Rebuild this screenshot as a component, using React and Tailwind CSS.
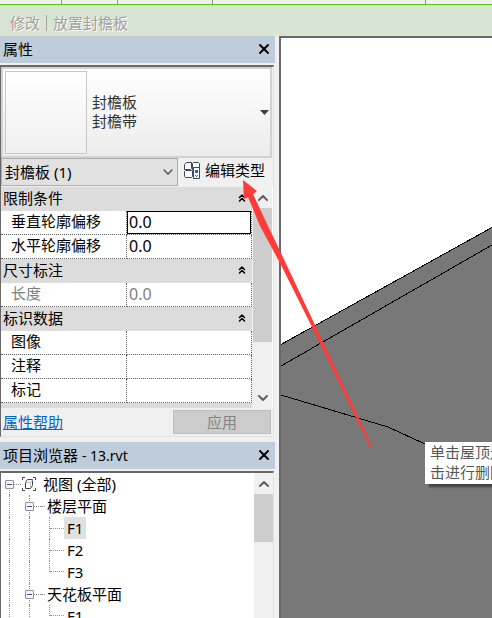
import { useState } from 'react';
import { ChevronDown, ChevronUp, ChevronsUp, X } from 'lucide-react';

const GROUPS = [
    {
        title: '限制条件',
        rows: [
            { id: 'vertical', label: '垂直轮廓偏移', active: true },
            { id: 'horizontal', label: '水平轮廓偏移' },
        ],
    },
    {
        title: '尺寸标注',
        rows: [{ id: 'length', label: '长度', disabled: true }],
    },
    {
        title: '标识数据',
        rows: [
            { id: 'image', label: '图像' },
            { id: 'comment', label: '注释' },
            { id: 'mark', label: '标记' },
        ],
    },
    { title: '', rows: [] },
];

const TitleBar = ({ children }) => (
    <div className="flex h-[27px] items-center justify-between bg-[#bfccda] pb-px pl-[3px] pr-[3px]">
        <h2>{children}</h2>
        <button type="button" aria-label="关闭">
            <X size={16} strokeWidth={3} />
        </button>
    </div>
);

const Frame = ({ className, children }) => (
    <div className={`mt-[2px] w-[274px] border-l border-r border-t-2 border-l-[#696969] border-r-[#e3e3e3] border-t-[#696969] ${className}`}>
        {children}
    </div>
);

const TypeIcon = () => (
    <svg width="17" height="17" viewBox="0 0 17 17" fill="#fafafa" stroke="#3b4656">
        <path d="M2.500 .5h5v6l-1 1h-6v-5z" />
        <path d="M9.500 .5h5l1 1v5l-1 1h-6v-6z" />
        <path d="M1.500 8.500h7v6l-1 1h-6l-1-1v-5z" />
        <path d="M9.500 5.500h6v11h-6z" fill="#fff" />
        <path d="M11 8h3v3h-3z" fill="#1d65b5" stroke="none" />
        <path d="M11 13.500h1M13 13.500h1M12 14.500h1" stroke="#1d65b5" />
    </svg>
);

const ViewsIcon = () => (
    <svg width="14" height="14" viewBox="0 0 14 14" fill="none" stroke="#444">
        <path d="M3 .5H.5V3M11 .5h2.500V3M.5 11v2.500H3M13.500 11v2.500H11" />
        <path d="M3.500 5.500l2-3h5v6l-2 3h-5z" fill="#fff" />
        <path d="M4 5.500h4.500V11M8.500 5.500l2-2.500" stroke="#b8c0ca" />
    </svg>
);

const Scrollbar = ({ thumb, end }) => (
    <div className="flex w-[19px] shrink-0 flex-col items-center bg-[#f0f0f0]">
        <button type="button" aria-label="向上滚动" className="flex h-[21px] w-full items-center justify-center">
            <ChevronUp size={16} strokeWidth={3} color="#606060" />
        </button>
        <div className={`w-full bg-[#cdcdcd] ${thumb}`} />
        {end && (
            <button type="button" aria-label="向下滚动" className="mt-auto flex h-[21px] w-full items-center justify-center">
                <ChevronDown size={16} strokeWidth={3} color="#606060" />
            </button>
        )}
    </div>
);

const PropertyTable = () => {
    const [values, setValues] = useState({ vertical: '0.0', horizontal: '0.0', length: '0.0', image: '', comment: '', mark: '' });

    return (
        <table className="w-[251px] table-fixed border-separate border-spacing-0">
            <colgroup>
                <col className="w-[126px]" />
                <col className="w-[125px]" />
            </colgroup>
            {GROUPS.map((group) => (
                <tbody key={group.title}>
                    <tr className="bg-[#dcdcdc]">
                        <th colSpan={2} className="h-6 p-0 text-left font-normal">
                            <div className="flex h-6 items-center justify-between pb-[2px] pl-[2px] pr-1">
                                {group.title}
                                <button type="button" aria-label={`折叠${group.title}`} className="ml-auto">
                                    <ChevronsUp size={12} strokeWidth={3} />
                                </button>
                            </div>
                        </th>
                    </tr>
                    {group.rows.map((row) => (
                        <tr key={row.id} className={row.disabled ? 'text-[#808080]' : ''}>
                            <th className="h-6 border-b border-r border-dotted border-[#606060] p-0 text-left font-normal">
                                <label htmlFor={row.id} className="block h-[23px] pl-[10px] leading-[21px]">{row.label}</label>
                            </th>
                            <td className="h-6 border-b border-r border-dotted border-[#606060] p-0">
                                <input
                                    id={row.id}
                                    value={values[row.id]}
                                    disabled={row.disabled}
                                    onChange={(e) => setValues({ ...values, [row.id]: e.target.value })}
                                    className={`block h-[23px] w-full border bg-white px-px pb-[2px] text-base leading-5 outline-none ${row.active ? 'border-black' : 'border-transparent'}`}
                                />
                            </td>
                        </tr>
                    ))}
                </tbody>
            ))}
        </table>
    );
};

// Vertical tree line, crossing the whole row
const Guide = () => (
    <span className="h-full w-5 shrink-0 pl-[8px]">
        <span className="block h-full border-l border-dotted border-[#909090]" />
    </span>
);

const Expander = ({ open, onToggle, top }) => (
    <span className="relative flex h-full w-5 shrink-0 items-end pl-[8px]">
        <span className={`flex w-full border-l border-dotted border-[#909090] ${top ? 'h-1/2 items-start' : 'h-full items-center'}`}>
            <span className="w-full border-t border-dotted border-[#909090]" />
        </span>
        <button
            type="button"
            onClick={onToggle}
            aria-label={open ? '折叠' : '展开'}
            className="absolute left-1 top-[7px] flex size-[9px] items-center justify-center rounded-[1px] border border-[#909090] bg-[#f6f6f6]"
        >
            <span className="h-px w-[5px] bg-[#3c50a0]" />
        </button>
    </span>
);

const Leaf = ({ name, last, selected, onSelect }) => (
    <li className="flex h-[22px]">
        <Guide />
        <Guide />
        <span className="h-full w-[23px] shrink-0 pl-[8px]">
            <span className={`flex border-l border-dotted border-[#909090] ${last ? 'h-1/2 items-end' : 'h-full items-center'}`}>
                <span className="w-full border-t border-dotted border-[#909090]" />
            </span>
        </span>
        <button type="button" onClick={onSelect} className={`px-[3px] ${selected ? 'bg-[#e0e0e0]' : ''}`}>
            {name}
        </button>
    </li>
);

const Branch = ({ title, names, selected, onSelect }) => {
    const [open, setOpen] = useState(true);

    return (
        <li>
            <div className="flex h-[22px] items-center">
                <Guide />
                <Expander open={open} onToggle={() => setOpen(!open)} />
                <span className="mr-[2px] w-1 border-t border-dotted border-[#909090]" />
                {title}
            </div>
            {open && (
                <ul>
                    {names.map((name, i) => (
                        <Leaf
                            key={name}
                            name={name}
                            last={i === names.length - 1}
                            selected={selected === title + name}
                            onSelect={() => onSelect(title + name)}
                        />
                    ))}
                </ul>
            )}
        </li>
    );
};

const ProjectTree = () => {
    const [open, setOpen] = useState(true);
    const [selected, setSelected] = useState('楼层平面F1');

    return (
        <div className="min-w-0 flex-1 overflow-hidden">
            <div className="flex h-[22px] items-center">
                <Expander top open={open} onToggle={() => setOpen(!open)} />
                <span className="ml-px mr-[7px]">
                    <ViewsIcon />
                </span>
                视图 (全部)
            </div>
            {open && (
                <ul>
                    <Branch title="楼层平面" names={['F1', 'F2', 'F3']} selected={selected} onSelect={setSelected} />
                    <Branch title="天花板平面" names={['F1']} selected={selected} onSelect={setSelected} />
                </ul>
            )}
        </div>
    );
};

const PropertiesPanel = () => (
    <section>
        <TitleBar>属性</TitleBar>
        <Frame className="border-b border-b-[#e3e3e3]">
            <button
                type="button"
                className="flex h-[91px] w-[271px] items-center border-2 border-[#d2d2d2] bg-linear-to-b from-white to-[#ececec] pl-[2px] pr-px text-left leading-[19px] text-[#333]"
            >
                <span className="mr-[5px] h-[83px] w-[82px] border border-[#c8c8c8] bg-linear-to-b from-white to-[#f0f0f0]" />
                <span className="pb-[2px]">
                    封檐板
                    <br />
                    封檐带
                </span>
                <svg width="9" height="5" className="ml-auto" fill="#404040">
                    <path d="M0 0h9L4.500 5z" />
                </svg>
            </button>
            <div className="flex h-[29px] items-start">
                <div className="relative w-[177px]">
                    <select aria-label="类型过滤器" className="h-7 w-full appearance-none border border-[#adadad] bg-[#e1e1e1] pb-px pl-[3px]">
                        <option>封檐板 (1)</option>
                    </select>
                    <ChevronDown size={16} strokeWidth={2} color="#505050" className="pointer-events-none absolute right-[2px] top-[6px]" />
                </div>
                <button type="button" className="flex h-6 items-center gap-1 pl-[6px]">
                    <TypeIcon />
                    编辑类型
                </button>
            </div>
            <div className="flex h-[221px] overflow-hidden bg-white">
                <PropertyTable />
                <span className="w-px bg-[#f0f0f0]" />
                <Scrollbar thumb="h-[134px]" end />
            </div>
            <div className="flex h-7 items-center justify-between pl-[2px] pr-[2px]">
                <a href="#help" className="text-[#0066cc] underline">属性帮助</a>
                <button type="button" disabled className="h-6 w-[98px] border border-[#bfbfbf] bg-[#cccccc] text-[#838383]">
                    应用
                </button>
            </div>
        </Frame>
    </section>
);

const BrowserPanel = () => (
    <section className="mt-[5px] flex min-h-0 flex-1 flex-col">
        <TitleBar>
            项目浏览器 <span className="text-sm">- 13.rvt</span>
        </TitleBar>
        <Frame className="flex min-h-0 flex-1 bg-white">
            <ProjectTree />
            <Scrollbar thumb="h-[48px]" />
        </Frame>
    </section>
);

const ModelView = () => (
    <main className="relative min-w-0 flex-1 overflow-hidden border-l-2 border-t-2 border-[#696969] bg-white">
        <svg className="block size-full" fill="none" stroke="#000" shapeRendering="crispEdges">
            <path d="M-1 307L4000 -1911V4000H-1z" fill="#787878" />
            <path d="M0 328L4000 -1966M0 357L107 389L144 406L240 450" />
        </svg>
        <div role="tooltip" className="absolute left-36 top-[404px] whitespace-nowrap bg-white pb-[2px] pl-[5px] pr-2 leading-5 text-[#575757] shadow-[4px_3px_2px_#404040]">
            单击屋顶边
            <br />
            击进行删除
        </div>
    </main>
);

const App = () => (
    <div className="relative flex h-screen flex-col overflow-hidden bg-[#f0f0f0] font-['Noto_Sans','Noto_Sans_CJK_SC',sans-serif] text-[15px] leading-[22px] text-black">
        <div className="flex h-[5px] shrink-0 border-b border-[#4fc414]">
            <span className="w-[62px] border-r border-[#909090]" />
            <span className="w-[56px] border-r border-[#909090]" />
            <span className="w-[95px] border-r border-[#909090]" />
            <span className="w-[213px] border-r border-[#909090]" />
        </div>
        <header className="flex h-[31px] shrink-0 items-center gap-[6px] bg-[#d9e4d2] pl-[10px] pt-1 text-[#a0a0a0] [text-shadow:1px_1px_#fff]">
            <span>修改</span>
            <span className="h-4 w-px bg-[#a0a0a0]" />
            <span>放置封檐板</span>
        </header>
        <div className="flex min-h-0 flex-1">
            <aside className="flex w-[279px] shrink-0 flex-col pr-1">
                <PropertiesPanel />
                <BrowserPanel />
            </aside>
            <ModelView />
        </div>
        {/* callout arrow pointing at the edit type button */}
        <svg className="pointer-events-none absolute left-0 top-0" width="380" height="460" fill="#ff3a38">
            <path d="M243 180L257 191L253 194L268 226L280 251L315 325L359 418L372 447L370 447L357 420L311 325L280 263L260 226L248 197L244 199z" />
        </svg>
    </div>
);

export default App;
